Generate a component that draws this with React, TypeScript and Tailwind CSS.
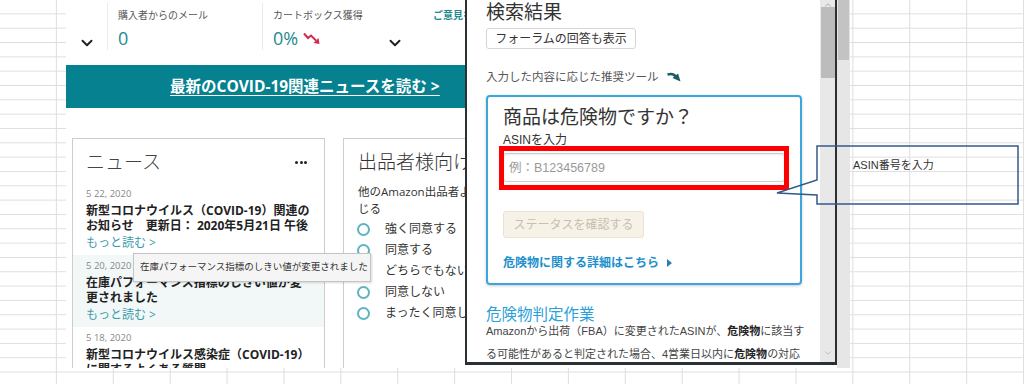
import { ChevronDown, ChevronUp } from "lucide-react";

const news = [
  {
    date: "5 22, 2020",
    lines: ["新型コロナウイルス（COVID-19）関連の", "お知らせ　更新日： 2020年5月21日 午後"],
    hl: false,
  },
  {
    date: "5 20, 2020",
    lines: ["在庫パフォーマンス指標のしきい値が変", "更されました"],
    hl: true,
  },
  {
    date: "5 18, 2020",
    lines: ["新型コロナウイルス感染症（COVID-19）", "に関するよくある質問"],
    hl: false,
  },
];

const answers = ["強く同意する", "同意する", "どちらでもない", "同意しない", "まったく同意しない"];

function TrendDown() {
  return (
    <svg width="18" height="13" viewBox="0 0 18 13">
      <polyline points="1,1.5 5,6 8,3.5 13,8.5" fill="none" stroke="#d42a4f" strokeWidth="2" />
      <polygon points="10.5,11 16.5,12 15.5,6" fill="#d42a4f" />
    </svg>
  );
}

function SellerPage() {
  return (
    <div className="relative w-[399px] h-full shrink-0 overflow-hidden bg-white [font-family:'Open_Sans','Noto_Sans_CJK_JP',sans-serif]">
      {/* metrics row */}
      <div className="flex h-[55px]">
        <div className="w-[41px] shrink-0 flex justify-center pt-[34px]">
          <ChevronDown size={18} strokeWidth={2.6} className="text-[#222]" />
        </div>
        <div className="w-[155px] shrink-0 mt-[3px] h-[47px] border-l border-[#ebebeb] pl-[10px] pt-[5px]">
          <div className="text-[10px] leading-[14px] text-[#555] whitespace-nowrap">購入者からのメール</div>
          <div className="mt-[5px] text-[18px] leading-[22px] text-[#23898f]">0</div>
        </div>
        <div className="w-[120px] shrink-0 mt-[3px] h-[47px] border-l border-[#ebebeb] pl-[10px] pt-[5px]">
          <div className="text-[10px] leading-[14px] text-[#555] whitespace-nowrap">カートボックス獲得</div>
          <div className="mt-[5px] flex items-center gap-[5px]">
            <span className="text-[18px] leading-[22px] text-[#23898f]">0%</span>
            <TrendDown />
          </div>
        </div>
        <div className="w-[26px] shrink-0 flex justify-center pt-[34px]">
          <ChevronDown size={18} strokeWidth={2.6} className="text-[#222]" />
        </div>
        <div className="shrink-0 ml-[25px] pt-[8px] text-[10px] leading-[14px] font-bold text-[#23898f] whitespace-nowrap">
          ご意見を
        </div>
      </div>

      {/* covid banner */}
      <div className="mt-[10px] h-[43px] bg-[#05818f] flex items-center pl-[104px]">
        <span className="text-[15.5px] font-bold text-white underline underline-offset-[3px] whitespace-nowrap">
          最新のCOVID-19関連ニュースを読む &gt;
        </span>
      </div>

      {/* cards */}
      <div className="flex mt-[30px] ml-[6px] gap-[18px]">
        <div className="w-[253px] h-[240px] shrink-0 border border-[#cdcdcd]">
          <div className="h-[44px] flex items-start justify-between pt-[12px] pl-[13px] pr-[17px]">
            <div className="text-[19px] leading-[22px] font-light text-[#444]">ニュース</div>
            <div className="h-[22px] flex items-center gap-[1.5px]">
              <span className="w-[3px] h-[3px] rounded-full bg-[#222]" />
              <span className="w-[3px] h-[3px] rounded-full bg-[#222]" />
              <span className="w-[3px] h-[3px] rounded-full bg-[#222]" />
            </div>
          </div>
          {news.map((n) => (
            <div key={n.date} className={`h-[72px] px-[13px] pt-[4px] ${n.hl ? "bg-[#f2f7f8]" : ""}`}>
              <div className="text-[9.5px] leading-[14px] text-[#888]">{n.date}</div>
              <div className="mt-[3px] text-[12px] leading-[14.5px] font-bold text-[#222]">
                {n.lines.map((l) => (
                  <div key={l} className="whitespace-nowrap">{l}</div>
                ))}
              </div>
              <div className="mt-[2px] text-[12px] leading-[16px] text-[#3d9cab]">もっと読む &gt;</div>
            </div>
          ))}
        </div>

        <div className="w-[300px] h-[240px] shrink-0 border border-[#cdcdcd]">
          <div className="h-[44px] pt-[12px] pl-[14px]">
            <div className="text-[19px] leading-[22px] font-light text-[#333] whitespace-nowrap">出品者様向けアンケート</div>
          </div>
          <div className="pl-[14px] text-[11.5px] leading-[17px] text-[#333]">
            <div className="whitespace-nowrap">他のAmazon出品者よりも多くのサポートを受けていると感</div>
            <div>じる</div>
          </div>
          <div className="mt-[1.5px] pl-[13px]">
            {answers.map((a) => (
              <div key={a} className="h-[21px] flex items-center gap-[15px]">
                <span className="w-[13px] h-[13px] rounded-full border-2 border-[#5db3c1]" />
                <span className="text-[12px] text-[#333] whitespace-nowrap">{a}</span>
              </div>
            ))}
          </div>
        </div>
      </div>

      {/* tooltip */}
      <div className="absolute left-[67px] top-[253px] w-[238px] h-[29px] bg-[#f5f5f5] border border-[#c4c4c4] shadow-[1px_1px_2px_rgba(0,0,0,0.15)] flex items-center pl-[6px] text-[9.5px] text-[#333] whitespace-nowrap">
        在庫パフォーマンス指標のしきい値が変更されました
      </div>
    </div>
  );
}

function SearchPanel() {
  return (
    <div className="w-[372px] h-[365px] shrink-0 flex border-l-2 border-r-2 border-b-[3px] border-[#2b3034] bg-white [font-family:'Liberation_Sans','Noto_Sans_CJK_JP',sans-serif]">
      <div className="flex-1 pl-[19px] pt-[2px] overflow-hidden">
        <div className="text-[19px] leading-[22px] text-[#333]">検索結果</div>
        <div className="mt-[4px] w-[150px] h-[21px] border border-[#d6d6d6] rounded-[3px] flex items-center justify-center text-[12px] text-[#333]">
          フォーラムの回答も表示
        </div>
        <div className="mt-[20px] flex items-center gap-[8px] text-[11.5px] leading-[16px] text-[#555]">
          <span>入力した内容に応じた推奨ツール</span>
          <svg width="14" height="10" viewBox="0 0 14 10">
            <path d="M0.5 2.5 C4 1.5 7 2 8.5 4.5" fill="none" stroke="#1d5d69" strokeWidth="2.6" />
            <polygon points="5.5,6 13.5,9.5 11,1.5" fill="#1d5d69" />
          </svg>
        </div>

        <div className="mt-[10px] w-[316px] h-[190px] border-2 border-[#3ba6dd] rounded-[4px] shadow-[0_1px_3px_rgba(0,0,0,0.2)] pl-[15px] pt-[9px]">
          <div className="text-[19px] leading-[24px] text-[#333]">商品は危険物ですか？</div>
          <div className="mt-[2px] text-[12px] leading-[16px] text-[#333]">ASINを入力</div>
          <div className="relative mt-[5px] w-[282px] h-[29px]">
            <input
              readOnly
              placeholder="例：B123456789"
              className="w-full h-full border border-[#cccccc] rounded-[3px] shadow-[inset_0_1px_2px_rgba(0,0,0,0.08)] pl-[5px] text-[12.5px] placeholder:text-[#9a9a9a] outline-none"
            />
            <div className="absolute -left-[4px] -right-[4px] -top-[7px] -bottom-[8px] border-[5px] border-[#ff0000] pointer-events-none" />
          </div>
          <div className="mt-[29px] w-[141px] h-[27px] bg-[#f6f2e8] border border-[#ebe3cf] rounded-[3px] flex items-center justify-center text-[12px] text-[#c8bfad]">
            ステータスを確認する
          </div>
          <div className="mt-[17px] flex items-center gap-[8px] text-[12px] leading-[16px] font-bold text-[#1b8fcc]">
            <span>危険物に関する詳細はこちら</span>
            <svg width="5" height="8" viewBox="0 0 5 8">
              <polygon points="0,0 5,4 0,8" fill="#2a7db3" />
            </svg>
          </div>
        </div>

        <div className="mt-[22px] text-[15.5px] leading-[16px] text-[#2a9fda]">危険物判定作業</div>
        <div className="-mt-[3px] text-[11px] leading-[23px] text-[#444] whitespace-nowrap">
          <div>
            Amazonから出荷（FBA）に変更されたASINが、<b className="text-[#222]">危険物</b>に該当す
          </div>
          <div>
            る可能性があると判定された場合、4営業日以内に<b className="text-[#222]">危険物</b>の対応
          </div>
        </div>
      </div>

      <div className="w-[15px] h-full bg-[#e8e8e8] flex flex-col items-stretch">
        <div className="h-[7px] flex justify-center items-end overflow-hidden">
          <ChevronUp size={10} strokeWidth={2} className="text-[#a0a0a0] -mb-[3px]" />
        </div>
        <div className="h-[71px] ml-[1px] bg-[#bcbcbc]" />
        <div className="flex-1" />
        <div className="h-[14px] flex justify-center">
          <ChevronDown size={10} strokeWidth={1.6} className="text-[#a8a8a8]" />
        </div>
      </div>
    </div>
  );
}

function Callout() {
  return (
    <div className="absolute left-[770px] top-[140px] w-[254px] h-[70px]">
      <svg width="254" height="70" viewBox="0 0 254 70" className="absolute inset-0">
        <path d="M47 6 H248 V64 H47 V55 L7 53 L47 40 Z" fill="none" stroke="#35598a" strokeWidth="1.5" />
      </svg>
      <div className="absolute left-[83px] top-[18px] text-[11px] leading-[14px] text-[#333] whitespace-nowrap [font-family:'Liberation_Sans','Noto_Sans_CJK_JP',sans-serif]">
        ASIN番号を入力
      </div>
    </div>
  );
}

export default function App() {
  return (
    <div className="relative w-[1024px] h-[384px] overflow-hidden bg-white [background-image:linear-gradient(to_right,transparent_calc(100%_-_1px),#dedede_calc(100%_-_1px)),linear-gradient(to_bottom,transparent_calc(100%_-_1px),#dedede_calc(100%_-_1px))] [background-size:56.9px_14.33px]">
      <div className="pl-[66px]">
        <div className="flex w-[784px] h-[368px] bg-white overflow-hidden">
          <SellerPage />
          <SearchPanel />
          <div className="w-[13px] h-full bg-[#e6e6e6]">
            <div className="h-[60px] ml-[1px] mr-[1px] bg-[#c3c3c3]" />
          </div>
        </div>
      </div>
      <Callout />
    </div>
  );
}
